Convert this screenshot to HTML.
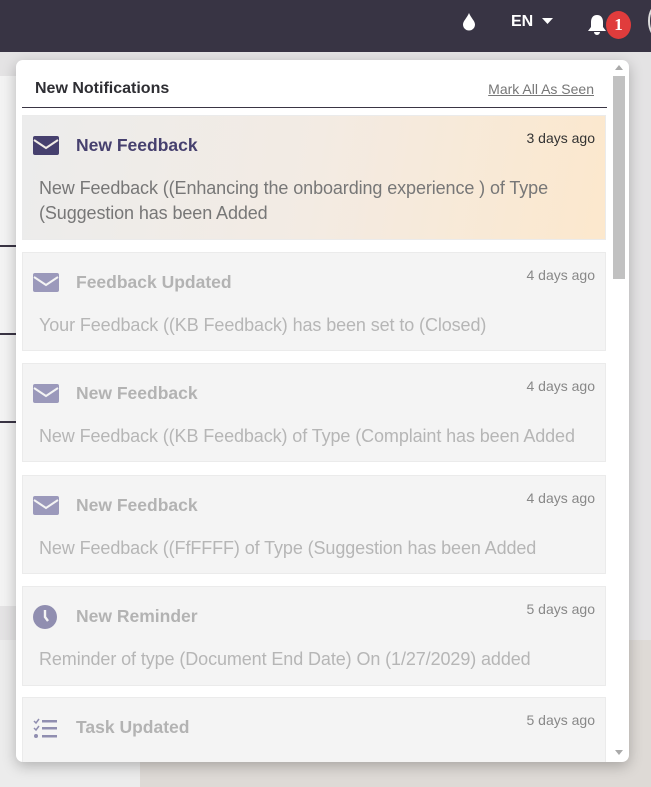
<!DOCTYPE html>
<html><head><style>
*{margin:0;padding:0;box-sizing:border-box}
body{width:651px;height:787px;overflow:hidden;background:#e9e7e6;font-family:"Liberation Sans",sans-serif;position:relative}
.top{position:absolute;left:0;top:0;width:651px;height:52px;background:#383444}
.page{position:absolute;left:0;top:52px;width:651px;height:590px;background:#e4e3e4}
.card{position:absolute;left:0;top:76px;width:60px;height:530px;background:#f3f3f3}
.hl{position:absolute;left:0;width:16px;height:2px;background:#3a3544}
.floor{position:absolute;left:140px;top:640px;width:511px;height:147px;background:#dedad6}
.floor2{position:absolute;left:0;top:640px;width:140px;height:147px;background:#ececec}
.panel{position:absolute;left:16px;top:60px;width:613px;height:702px;background:#fff;border-radius:7px;box-shadow:0 4px 14px rgba(0,0,0,.25);overflow:hidden}
.hdr{position:absolute;left:6px;top:0;width:585px;height:48px;border-bottom:1.5px solid #3a3544}
.hdr b{position:absolute;left:13px;top:20px;font-size:16px;color:#2e2e33}
.hdr a{position:absolute;right:13px;top:21px;font-size:14px;color:#777;text-decoration:underline}
.sb{position:absolute;left:597px;top:16px;width:12px;height:203px;background:#c1c1c1}
.item{position:absolute;left:6px;width:584px;background:#f4f4f4;border:1px solid #ebebeb}
.item .t{position:absolute;left:53px;top:19px;font-size:17.5px;font-weight:bold;color:#b3b3b3}
.item .d{position:absolute;right:10px;top:14px;font-size:14px;color:#888}
.item .b{position:absolute;left:16px;top:60px;font-size:18px;color:#b6b6b6;line-height:25px;width:570px;letter-spacing:-0.1px}
.item svg{position:absolute;left:10px;top:20px}
</style></head><body>
<div class="top">
<svg style="position:absolute;left:462px;top:12px" width="14" height="19" viewBox="0 0 14 19"><path d="M7 1C5 6 1 9 1 12.5A6 6 0 0 0 13 12.5C13 9 9 6 7 1Z" fill="#fff"/></svg>
<span style="position:absolute;left:511px;top:13px;color:#fff;font-size:16px;font-weight:bold">EN</span>
<svg style="position:absolute;left:542px;top:18px" width="11" height="6"><path d="M0 0H11L5.5 6Z" fill="#fff"/></svg>
<svg style="position:absolute;left:587px;top:14px" width="20" height="22" viewBox="0 0 20 22"><path d="M10 1C6 1 4 4 4 8V13L1 17H19L16 13V8C16 4 14 1 10 1ZM7 18A3 3 0 0 0 13 18Z" fill="#fff"/></svg>
<div style="position:absolute;left:606px;top:11px;width:25px;height:28px;border-radius:50%;background:#e03c3c;color:#fff;font:bold 17px 'Liberation Serif',serif;text-align:center;line-height:28px">1</div>
<div style="position:absolute;left:648px;top:4px;width:20px;height:34px;border:2px solid #ddd;border-radius:50%"></div>
</div>
<div class="page"></div>
<div class="card"></div>
<div class="hl" style="top:245px"></div><div class="hl" style="top:333px"></div><div class="hl" style="top:421px"></div>
<div class="floor2"></div><div class="floor"></div>
<div class="panel">
<div class="hdr"><b>New Notifications</b><a>Mark All As Seen</a></div>
<div class="sb"></div>
<svg style="position:absolute;left:599px;top:5px" width="8" height="5"><path d="M0 5L4 0L8 5Z" fill="#aaa"/></svg>
<svg style="position:absolute;left:599px;top:690px" width="8" height="5"><path d="M0 0L4 5L8 0Z" fill="#aaa"/></svg>

<div class="item" style="top:55px;height:125px;background:linear-gradient(100deg,#ececec 0%,#f3ebe3 50%,#fce8cd 100%)">
<svg width="26" height="20" viewBox="0 0 26 20"><rect x="0" y="0" width="26" height="19" rx="2" fill="#46406e"/><path d="M1 4L13 12L25 4" stroke="#f1ece6" stroke-width="2" fill="none"/></svg>
<span class="t" style="color:#46406e">New Feedback</span><span class="d" style="color:#333">3 days ago</span>
<div class="b" style="color:#777">New Feedback ((Enhancing the onboarding experience ) of Type (Suggestion has been Added</div></div>

<div class="item" style="top:192px;height:99px">
<svg width="26" height="20" viewBox="0 0 26 20"><rect width="26" height="19" rx="2" fill="#9b99bb"/><path d="M1 4L13 12L25 4" stroke="#f4f4f4" stroke-width="2" fill="none"/></svg>
<span class="t">Feedback Updated</span><span class="d">4 days ago</span>
<div class="b">Your Feedback ((KB Feedback) has been set to (Closed)</div></div>

<div class="item" style="top:303px;height:99px">
<svg width="26" height="20" viewBox="0 0 26 20"><rect width="26" height="19" rx="2" fill="#9b99bb"/><path d="M1 4L13 12L25 4" stroke="#f4f4f4" stroke-width="2" fill="none"/></svg>
<span class="t">New Feedback</span><span class="d">4 days ago</span>
<div class="b">New Feedback ((KB Feedback) of Type (Complaint has been Added</div></div>

<div class="item" style="top:415px;height:99px">
<svg width="26" height="20" viewBox="0 0 26 20"><rect width="26" height="19" rx="2" fill="#9b99bb"/><path d="M1 4L13 12L25 4" stroke="#f4f4f4" stroke-width="2" fill="none"/></svg>
<span class="t">New Feedback</span><span class="d">4 days ago</span>
<div class="b">New Feedback ((FfFFFF) of Type (Suggestion has been Added</div></div>

<div class="item" style="top:526px;height:100px">
<svg width="24" height="24" viewBox="0 0 24 24" style="top:18px"><circle cx="12" cy="12" r="12" fill="#908eb0"/><path d="M12 5V12L15 16" stroke="#f4f4f4" stroke-width="2.4" fill="none"/></svg>
<span class="t">New Reminder</span><span class="d">5 days ago</span>
<div class="b">Reminder of type (Document End Date) On (1/27/2029) added</div></div>

<div class="item" style="top:637px;height:100px">
<svg width="24" height="22" viewBox="0 0 24 22"><path d="M1 3L3 5L6 1M1 10L3 12L6 8" stroke="#908eb0" stroke-width="1.5" fill="none"/><circle cx="3" cy="18" r="2" fill="#908eb0"/><rect x="9" y="2" width="15" height="2.5" fill="#908eb0"/><rect x="9" y="9" width="15" height="2.5" fill="#908eb0"/><rect x="9" y="17" width="15" height="2.5" fill="#908eb0"/></svg>
<span class="t">Task Updated</span><span class="d">5 days ago</span></div>
</div>
</body></html>
